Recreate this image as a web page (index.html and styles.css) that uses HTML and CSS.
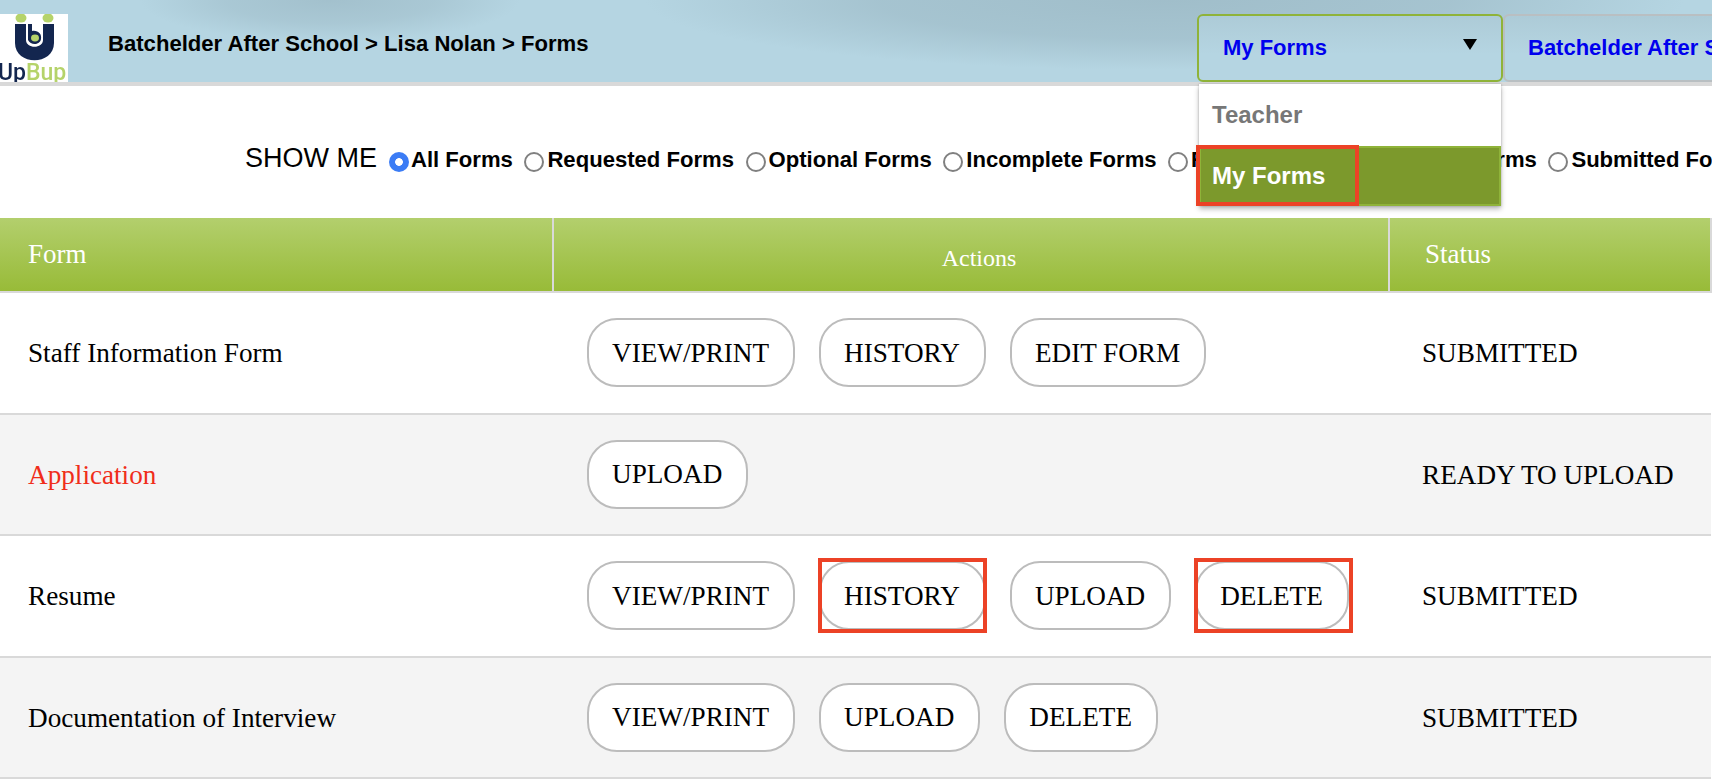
FILE: index.html
```html
<!DOCTYPE html>
<html lang="en">
<head>
<meta charset="utf-8">
<title>Forms</title>
<link rel="stylesheet" href="styles.css">
</head>
<body>
<header class="topbar">
  <div class="logo">
    <svg class="logo-mark" viewBox="0 0 68 50" width="68" height="50">
      <ellipse cx="21" cy="4" rx="5.5" ry="4.5" fill="#b5d36a"/>
      <ellipse cx="48" cy="4" rx="5.5" ry="4.5" fill="#b5d36a"/>
      <path d="M15 10H26V26C26 35 43 35 43 26V10H54V29C54 52 15 52 15 29Z" fill="#13264f"/>
      <path d="M28 10H32V17C38 16 42 20 41 25C40 31 31 32 28 26Z" fill="#13264f"/>
      <ellipse cx="35" cy="24" rx="4" ry="3.4" fill="#b5d36a"/>
    </svg>
    <div class="logo-word"><span class="logo-up">Up</span><span class="logo-bup">Bup</span></div>
  </div>
  <div class="crumbs">Batchelder After School &gt; Lisa Nolan &gt; Forms</div>
  <div class="selects">
    <div class="select select-open">
      <span>My Forms</span><span class="caret"></span>
      <ul class="menu">
        <li class="menu-item">Teacher</li>
        <li class="menu-item menu-item-active"><span class="mark mark-menu"></span>My Forms</li>
      </ul>
    </div>
    <div class="select select-org"><span>Batchelder After School</span></div>
  </div>
</header>

<form class="filters">
  <span class="filters-title">SHOW ME</span>
  <label class="filter"><span class="radio radio-on"></span>All Forms</label>
  <label class="filter"><span class="radio"></span>Requested Forms</label>
  <label class="filter"><span class="radio"></span>Optional Forms</label>
  <label class="filter"><span class="radio"></span>Incomplete Forms</label>
  <label class="filter"><span class="radio"></span>Ready To Be Resubmitted Forms</label>
  <label class="filter"><span class="radio"></span>Submitted Forms</label>
</form>

<table class="forms">
  <colgroup><col class="col-form"><col class="col-actions"><col></colgroup>
  <thead>
    <tr><th class="th-form">Form</th><th class="th-actions">Actions</th><th class="th-status">Status</th></tr>
  </thead>
  <tbody>
    <tr>
      <td>Staff Information Form</td>
      <td><div class="actions"><a class="btn">VIEW/PRINT</a><a class="btn">HISTORY</a><a class="btn">EDIT FORM</a></div></td>
      <td>SUBMITTED</td>
    </tr>
    <tr class="alt">
      <td class="required">Application</td>
      <td><div class="actions"><a class="btn">UPLOAD</a></div></td>
      <td>READY TO UPLOAD</td>
    </tr>
    <tr>
      <td>Resume</td>
      <td><div class="actions"><a class="btn">VIEW/PRINT</a><a class="btn">HISTORY<span class="mark mark-btn"></span></a><a class="btn">UPLOAD</a><a class="btn">DELETE<span class="mark mark-btn mark-btn-wide"></span></a></div></td>
      <td>SUBMITTED</td>
    </tr>
    <tr class="alt">
      <td>Documentation of Interview</td>
      <td><div class="actions"><a class="btn">VIEW/PRINT</a><a class="btn">UPLOAD</a><a class="btn">DELETE</a></div></td>
      <td>SUBMITTED</td>
    </tr>
  </tbody>
</table>
</body>
</html>
```

FILE: styles.css
```css
* { box-sizing: border-box; }
html, body { margin: 0; padding: 0; height: 784px; overflow: hidden; background: #fff; }
body { width: 1712px; font-family: "Liberation Serif", serif; color: #000; }

.topbar {
  position: relative;
  height: 86px;
  display: flex;
  align-items: flex-start;
  border-bottom: 4px solid #d9d9d9;
  background:
    radial-gradient(ellipse 190px 42px at 330px 0, rgba(155,184,196,.7), rgba(155,184,196,.45) 55%, rgba(155,184,196,0)),
    radial-gradient(ellipse 520px 70px at 1165px 0, rgba(155,184,196,.8), rgba(155,184,196,.6) 55%, rgba(155,184,196,0)),
    #b5d5e2;
}
.logo { width: 68px; height: 68px; margin-top: 14px; background: #fff; overflow: hidden; flex: none; }
.logo-mark { display: block; filter: blur(.5px); }
.logo-word { font: 500 23px/17px Roboto, sans-serif; margin-left: -2px; white-space: nowrap; filter: blur(.4px); }
.logo-up { color: #13264f; }
.logo-bup { color: #b5d36a; }

.crumbs {
  margin: 30px 0 0 40px;
  font: 700 22.1px/28px "Liberation Sans", sans-serif;
  white-space: nowrap;
}
.selects { position: absolute; left: 1197px; top: 14px; display: flex; }
.select {
  position: relative;
  height: 68px;
  padding: 0 24px;
  display: flex;
  align-items: center;
  justify-content: space-between;
  border: 2px solid #8fb339;
  border-radius: 6px;
  font: 700 22px/28px "Liberation Sans", sans-serif;
  color: #0000ee;
  background: linear-gradient(180deg, #adcbd7, #b5d5e2 60%);
}
.select-open { width: 306px; }
.select-org { width: 306px; padding-left: 23px; border-color: #b9bfc2; white-space: nowrap; overflow: hidden; }
.caret { width: 0; height: 0; margin: -8px 0 0 0; border-left: 7.5px solid transparent; border-right: 7.5px solid transparent; border-top: 11px solid #000; }

.menu {
  position: absolute;
  z-index: 5;
  left: 0;
  top: 68px;
  width: 302px;
  margin: 0;
  padding: 0;
  list-style: none;
  font-size: 24px;
  background: #fff;
  box-shadow: 0 3px 5px rgba(0,0,0,.28), 0 0 2px rgba(0,0,0,.2);
}
.menu-item { height: 62px; padding: 17px 13px; color: #777; }
.menu-item-active { position: relative; height: 60px; padding: 14px 11px; color: #fff; background: #7c992c; border: 2px solid #8fb339; }

.mark { position: absolute; border: 4px solid #ec4226; pointer-events: none; }
.mark-menu { left: -5px; top: -3px; width: 163px; height: 61px; }
.mark-btn { left: -3px; right: -3px; top: -5px; bottom: -5px; }
.mark-btn-wide { right: -6px; }

.filters {
  height: 132px;
  padding: 16px 0 0 245px;
  display: flex;
  align-items: center;
  white-space: nowrap;
  font: 700 22.1px/28px "Liberation Sans", sans-serif;
}
.filters-title { margin: -4px 12px 0 0; font-size: 27px; font-weight: 400; }
.filter { display: inline-flex; align-items: center; margin-right: 11.5px; }
.radio { flex: none; width: 20px; height: 20px; margin: 4px 3px 0 0; border: 2.5px solid #808080; border-radius: 50%; background: #fff; }
.radio-on { margin-right: 2px; border: 0; background: radial-gradient(circle, #fff 0 3.5px, #3b7cf5 4.2px); }

.forms { width: 1712px; border-collapse: collapse; table-layout: fixed; font-size: 27.2px; }
.col-form { width: 553px; }
.col-actions { width: 836px; }
.forms th {
  height: 74px;
  padding: 0 0 0 28px;
  text-align: left;
  font-weight: 400;
  font-size: 27px;
  color: #fff;
  background: linear-gradient(180deg, #b3cf6d, #98bb38);
  border-bottom: 2px solid #d9d9d9;
  border-right: 2px solid #d9d9d9;
}
.forms th:last-child { padding-left: 35px; }
.forms .th-actions { padding: 8px 0 0 16px; text-align: center; font-size: 24px; }
.forms td { height: 121.5px; padding: 2px 0 0 28px; border-bottom: 2px solid #d9d9d9; }
.forms td:nth-child(2) { padding-left: 34px; }
.forms td:nth-child(3) { padding-left: 33px; }
.alt td { background: #f4f4f4; }
.required { color: #f02d1a; }

.actions { display: flex; gap: 24px; margin-top: -2px; }
.btn {
  position: relative;
  height: 69px;
  padding: 1px 24px 0 23px;
  display: flex;
  align-items: center;
  border: 2px solid #bcbcbc;
  border-radius: 30px;
  background: #fff;
}
```
